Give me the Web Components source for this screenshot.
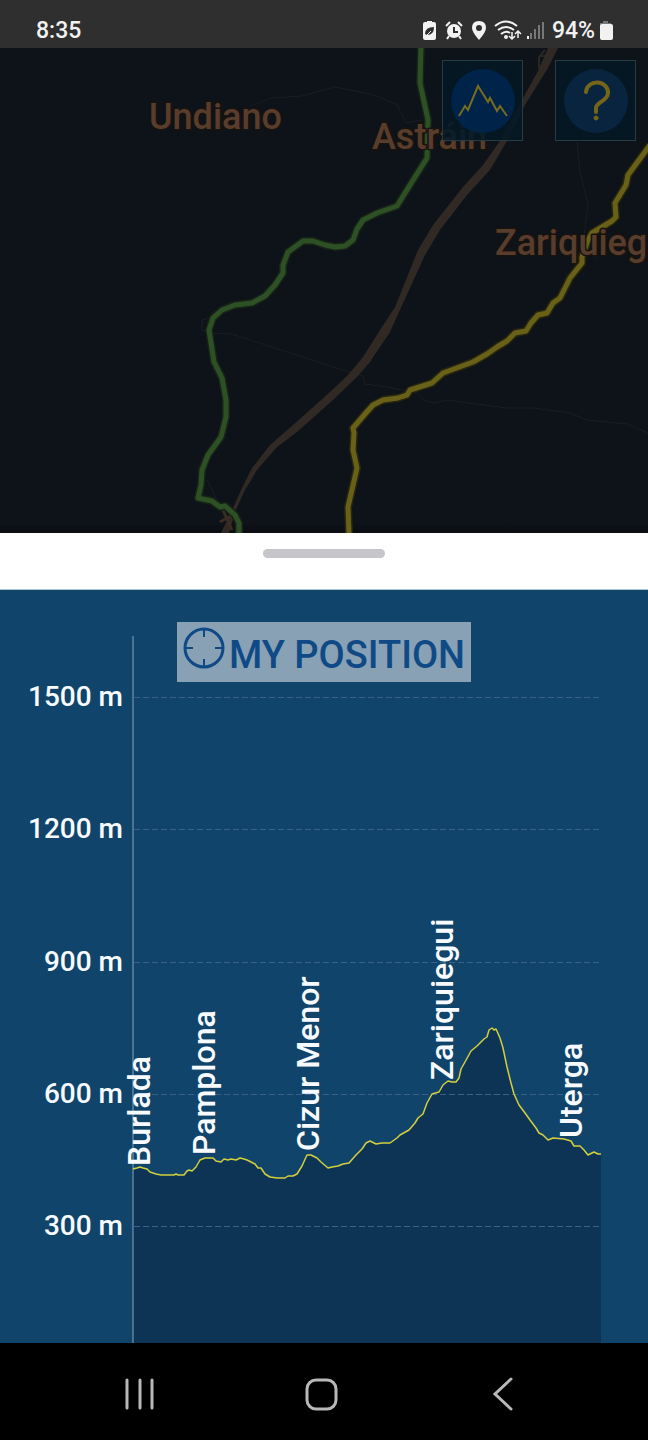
<!DOCTYPE html>
<html lang="en">
<head>
<meta charset="utf-8">
<meta name="viewport" content="width=device-width, initial-scale=1">
<title>Elevation profile</title>
<style>
    html, body {
        margin: 0;
        height: 100%;
        background: #000;
        font-family: Roboto, "Noto Sans", sans-serif;
        font-weight: 500;
    }
</style>
</head>
<body>
<trail-app>
    <status-bar slot="status" time="8:35" battery="94%"></status-bar>
    <trail-map slot="map">
        <map-button label="Elevation profile" tone="#00234a">
            <svg viewBox="8 8 64 64" fill="none" stroke="#756d1c" stroke-width="2"><path d="M16 55l6-10 3 4 10-24 10 16 2-4 7 13 3-5 7 10"/></svg>
        </map-button>
        <map-button label="Help" tone="#08243e">
            <svg viewBox="8 8 64 64" fill="none" stroke="#756518" stroke-width="4" stroke-linecap="round" stroke-linejoin="round"><path d="M30 31a11 10 0 0 1 22 1c0 8-12 9-12 15v4"/><circle cx="40" cy="57" r="2" fill="#756518" stroke-width="1"/></svg>
        </map-button>
    </trail-map>
    <bottom-sheet slot="sheet">
        <elevation-chart>
            <position-button slot="action">MY POSITION</position-button>
        </elevation-chart>
    </bottom-sheet>
    <nav-bar slot="nav"></nav-bar>
</trail-app>

<script>
(function () {
    function attach(el, html) {
        const template = document.createElement("template");
        template.innerHTML = html;
        const root = el.attachShadow({ mode: "open" });
        root.appendChild(template.content.cloneNode(true));
        return root;
    }

    class TrailApp extends HTMLElement {
        constructor() {
            super();
            attach(this, `
            <style>
                :host {
                    display: flex;
                    flex-direction: column;
                    min-height: 100vh;
                }

                .map {
                    flex: 1;
                    display: flex;
                    min-height: 240px;
                }
            </style>
            <slot name="status"></slot>
            <div class="map"><slot name="map"></slot></div>
            <slot name="sheet"></slot>
            <slot name="nav"></slot>
            `);
        }
    }

    class StatusBar extends HTMLElement {
        constructor() {
            super();
            this.root = attach(this, `
            <style>
                :host {
                    display: flex;
                    align-items: center;
                    justify-content: space-between;
                    box-sizing: border-box;
                    height: 48px;
                    padding: 14px 35px 0 36px;
                    background: #2f2f2f;
                    color: #f2f2f2;
                    font-size: 23px;
                    line-height: 34px;
                }

                .icons {
                    display: flex;
                    align-items: center;
                }

                svg {
                    display: block;
                    height: 24px;
                }
            </style>
            <span class="time"></span>
            <div class="icons">
                <svg width="130" viewBox="0 1 130 24" fill="#f2f2f2" aria-hidden="true">
                    <path d="M5 4V3h5v1h2q2 0 2 2v14q0 2-2 2H3q-2 0-2-2V6q0-2 2-2z"/>
                    <path d="M3 16q0-7 9-7 0 8-7 8z" fill="#2f2f2f"/>
                    <path d="M4 18l5-5" stroke="#f2f2f2"/>
                    <circle cx="32" cy="13" r="7"/>
                    <path d="M32 9v5h4" fill="none" stroke="#2f2f2f" stroke-width="2"/>
                    <path d="M24 8l4-4M40 8l-4-4M27 18l-2 3M37 18l2 3" stroke="#f2f2f2" stroke-width="2"/>
                    <path fill-rule="evenodd" d="M57 3q-7 0-7 7 0 4 7 12 7-8 7-12 0-7-7-7zm0 4a3 3 0 1 1 0 6 3 3 0 0 1 0-6z"/>
                    <g fill="none" stroke="#f2f2f2" stroke-width="2">
                        <path d="M73 8q11-9 22 0M76 12q8-6 16 0M79 16q5-4 9-1"/>
                        <path d="M90 14v7m-3-3l3 3 3-3M96 20v-7m-3 3l3-3 3 3" stroke-width="1.5"/>
                    </g>
                    <circle cx="84" cy="19" r="2"/>
                    <path d="M105 18h2v3h-2z"/>
                    <path d="M108 15h2v6h-2zM112 11h2v10h-2zM116 7h2v14h-2zM120 4h2v17h-2z" fill="#777"/>
                </svg>
                <span class="battery"></span>
                <svg width="18" viewBox="0 1 18 24" aria-hidden="true">
                    <path d="M8 3h5v2h3v3H5V5h3z" fill="#777"/>
                    <rect x="5" y="6" width="13" height="16" rx="2" fill="#f2f2f2"/>
                </svg>
            </div>
            `);
        }

        connectedCallback() {
            this.root.querySelector(".time").textContent = this.getAttribute("time");
            this.root.querySelector(".battery").textContent = this.getAttribute("battery");
        }
    }

    const GREEN_TRAIL = "421,46 420,83 428,120 427,158 410,185 397,206 377,213 363,220 357,229 353,240 345,246 335,247 325,245 313,241 303,241 288,252 283,265 283,273 275,285 265,296 252,303 235,305 222,310 213,318 209,330 214,362 222,378 226,400 226,417 221,437 208,455 202,470 201,485 198,498 212,501 220,507 225,506 235,515 239,523 239,534";
    const YELLOW_TRAIL = "650,145 628,175 626,185 615,203 616,217 612,221 592,233 588,240 582,257 582,263 570,278 560,298 553,303 547,313 538,315 531,323 526,331 515,333 507,341 497,347 487,354 473,362 443,373 432,383 410,390 407,395 398,398 383,400 373,405 365,414 353,428 354,433 353,450 357,468 348,507 349,534";

    class TrailMap extends HTMLElement {
        constructor() {
            super();
            attach(this, `
            <style>
                :host {
                    display: block;
                    position: relative;
                    flex: 1;
                    overflow: hidden;
                    background: linear-gradient(#0e1219 98%, #0a0c11);
                }

                svg {
                    position: absolute;
                    inset: 0;
                    width: 100%;
                    height: 100%;
                }

                text {
                    font-size: 36px;
                    font-weight: 500;
                    fill: #593d2c;
                    stroke: #17130f;
                    stroke-width: 3px;
                    paint-order: stroke;
                }

                .controls {
                    position: absolute;
                    top: 12px;
                    right: 12px;
                    display: flex;
                    gap: 32px;
                }
            </style>
            <svg viewBox="0 48 648 485" preserveAspectRatio="xMidYMid slice" fill="none" stroke-linejoin="round">
                <g stroke="#1b1d20">
                    <path d="M250 106l22-8 30-2 33-9 30 6 12 3 20 9 9 18 16-3"/>
                    <path d="M210 318l-8 2v10l8 3 22 1 58 19 50 16 23 7 2 8 22 3 30 6 6 7 10 3 14-3 60 8 26 0 37 5 17 7 40 4 21 9"/>
                    <path d="M577 142l3 30 8 32-4 34 12 22M207 480l14 28"/>
                </g>
                <path d="M545 50l-6 7v12M539 56h8" stroke="#292724" stroke-width="2"/>
                <path d="M548 48L538 71 522 100 500 141 483 165 463 187 433 225 418 250 395 307 380 330 363 357 347 376 330 392 293 425 270 445 252 468 242 488 232 510 221 533H229L235 512 245 490 257 470 277 447 297 432 333 400 357 377 370 362 390 332 400 310 425 255 440 230 467 195 490 170 507 141 525 105 548 68 558 48z" fill="#302924"/>
                <path d="M222 508l10 22M220 522l14-8" stroke="#3a2c22" stroke-width="3"/>
                <polyline points="${GREEN_TRAIL}" stroke="#172417" stroke-width="8"/>
                <polyline points="${GREEN_TRAIL}" stroke="#2d5125" stroke-width="5"/>
                <polyline points="${YELLOW_TRAIL}" stroke="#28270f" stroke-width="8"/>
                <polyline points="${YELLOW_TRAIL}" stroke="#686117" stroke-width="5"/>
                <text x="149" y="129">Undiano</text>
                <text x="372" y="149">Astráin</text>
                <text x="495" y="255">Zariquieg</text>
            </svg>
            <div class="controls"><slot></slot></div>
            `);
        }
    }

    class MapButton extends HTMLElement {
        constructor() {
            super();
            this.root = attach(this, `
            <style>
                :host {
                    display: block;
                }

                button {
                    display: grid;
                    place-items: center;
                    width: 81px;
                    height: 81px;
                    padding: 0;
                    border: 1px solid #263c43;
                    background: rgba(3, 25, 37, 0.86);
                }

                .disc {
                    width: 64px;
                    height: 64px;
                    border-radius: 50%;
                    background: var(--tone);
                }

                ::slotted(svg) {
                    display: block;
                    width: 64px;
                    height: 64px;
                }
            </style>
            <button type="button"><span class="disc"><slot></slot></span></button>
            `);
        }

        connectedCallback() {
            this.root.querySelector("button").setAttribute("aria-label", this.getAttribute("label"));
            this.style.setProperty("--tone", this.getAttribute("tone"));
        }
    }

    class BottomSheet extends HTMLElement {
        constructor() {
            super();
            attach(this, `
            <style>
                :host {
                    display: block;
                    background: #fff;
                }

                .header {
                    box-sizing: border-box;
                    height: 57px;
                    padding-top: 16px;
                    border-bottom: 1px solid #a9cbdc;
                }

                .handle {
                    width: 122px;
                    height: 9px;
                    margin: 0 auto;
                    border-radius: 5px;
                    background: #c6c6ca;
                }
            </style>
            <div class="header"><div class="handle"></div></div>
            <slot></slot>
            `);
        }
    }

    class PositionButton extends HTMLElement {
        constructor() {
            super();
            attach(this, `
            <style>
                :host {
                    display: block;
                }

                button {
                    display: flex;
                    align-items: center;
                    gap: 4px;
                    height: 60px;
                    padding: 0 6px;
                    border: 0;
                    background: #88a1b5;
                    color: #0f4a86;
                    font: inherit;
                    font-size: 38px;
                    line-height: 48px;
                    white-space: nowrap;
                }

                svg {
                    width: 42px;
                    height: 42px;
                    margin-bottom: 8px;
                }

                span {
                    padding-top: 6px;
                }
            </style>
            <button type="button">
                <svg viewBox="0 0 42 42" fill="none" stroke="#0f4a86" aria-hidden="true">
                    <circle cx="21" cy="21" r="19" stroke-width="3"/>
                    <path d="M21 2v8M21 32v8M2 21h8M32 21h8" stroke-width="2"/>
                </svg>
                <span><slot></slot></span>
            </button>
            `);
        }
    }

    // Towns along the stage: name, baseline x, start y
    const TOWNS = [
        ["Burlada", 150, 1166],
        ["Pamplona", 215, 1155],
        ["Cizur Menor", 319, 1151],
        ["Zariquiegui", 453, 1080],
        ["Uterga", 582, 1138],
    ];

    // Height marks in metres and the y of each grid line
    const LEVELS = [[1500, 697], [1200, 829], [900, 962], [600, 1094], [300, 1226]];

    const PROFILE = "133,1169 137,1168 140,1167 143,1168 147,1169 150,1172 156,1174 161,1175 174,1175 176,1174 178,1175 184,1175 187,1171 189,1170 192,1171 196,1167 200,1160 205,1158 213,1158 216,1161 221,1162 224,1159 228,1160 231,1159 236,1160 240,1158 244,1159 247,1160 251,1162 255,1164 258,1168 261,1168 265,1174 270,1177 277,1178 285,1178 288,1176 293,1176 297,1174 302,1166 307,1155 311,1155 317,1158 321,1162 328,1168 332,1167 338,1166 343,1164 349,1163 356,1155 362,1149 366,1143 370,1141 376,1144 382,1143 390,1143 397,1138 400,1135 409,1130 415,1123 418,1118 423,1114 427,1103 432,1094 439,1092 443,1085 448,1081 452,1082 456,1082 459,1078 461,1069 465,1062 471,1051 477,1046 484,1039 487,1037 489,1030 492,1028 494,1030 496,1029 500,1038 503,1048 507,1067 511,1083 514,1094 519,1105 525,1113 530,1120 536,1128 539,1133 543,1135 548,1140 553,1138 564,1139 571,1141 574,1146 580,1146 584,1150 588,1155 594,1152 598,1154 601,1154";

    class ElevationChart extends HTMLElement {
        constructor() {
            super();
            this.root = attach(this, `
            <style>
                :host {
                    display: block;
                    position: relative;
                    background: #11446a;
                }

                svg {
                    display: block;
                    width: 100%;
                }

                text {
                    fill: #f7fbff;
                    font-weight: 500;
                }

                .level {
                    font-size: 28px;
                    text-anchor: end;
                }

                .town {
                    font-size: 32px;
                }

                .grid {
                    stroke: #3a6084;
                    stroke-dasharray: 6 3;
                }

                .action {
                    position: absolute;
                    top: 32px;
                    left: 0;
                    right: 0;
                    display: flex;
                    justify-content: center;
                }
            </style>
            <svg viewBox="0 590 648 753" role="img" aria-label="Elevation profile"></svg>
            <div class="action"><slot name="action"></slot></div>
            `);
        }

        connectedCallback() {
            this.render();
        }

        render() {
            const levels = LEVELS.map(([metres, y]) => `
                <text class="level" x="123" y="${y + 9}">${metres} m</text>
                <path class="grid" d="M134 ${y}.5H601"/>`).join("");
            const towns = TOWNS.map(([name, x, y]) => `
                <text class="town" transform="translate(${x} ${y}) rotate(-90)">${name}</text>`).join("");

            this.root.querySelector("svg").innerHTML = `
                <polygon points="133,1343 ${PROFILE} 601,1343" fill="#0d3454"/>
                ${levels}
                <path d="M133 636V1343" stroke="#86a3bc"/>
                <polyline points="${PROFILE}" fill="none" stroke="#d3cf3e" stroke-width="1.5" stroke-linejoin="round"/>
                ${towns}`;
        }
    }

    class NavBar extends HTMLElement {
        constructor() {
            super();
            attach(this, `
            <style>
                :host {
                    display: grid;
                    grid-template-columns: repeat(3, 1fr);
                    box-sizing: border-box;
                    height: 97px;
                    padding: 0 54px 0 48px;
                    background: #000;
                }

                button {
                    display: grid;
                    place-items: center;
                    padding: 4px 0 0;
                    border: 0;
                    background: none;
                }

                svg {
                    width: 36px;
                    height: 36px;
                    fill: none;
                    stroke: #b8b8b8;
                    stroke-width: 3;
                    stroke-linecap: round;
                }
            </style>
            <button type="button" aria-label="Recent apps"><svg viewBox="0 0 36 36"><path d="M6 4v28M19 4v28M31 4v28"/></svg></button>
            <button type="button" aria-label="Home"><svg viewBox="0 0 36 36"><rect x="4" y="4" width="29" height="29" rx="9"/></svg></button>
            <button type="button" aria-label="Back"><svg viewBox="0 0 36 36"><path d="M26 3L10 18l16 15"/></svg></button>
            `);
        }
    }

    customElements.define("trail-app", TrailApp);
    customElements.define("status-bar", StatusBar);
    customElements.define("trail-map", TrailMap);
    customElements.define("map-button", MapButton);
    customElements.define("bottom-sheet", BottomSheet);
    customElements.define("position-button", PositionButton);
    customElements.define("elevation-chart", ElevationChart);
    customElements.define("nav-bar", NavBar);
})();
</script>
</body>
</html>
